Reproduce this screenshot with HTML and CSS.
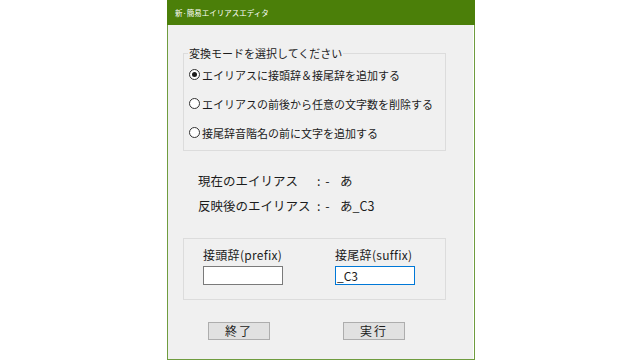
FILE: index.html
```html
<!DOCTYPE html>
<html lang="ja">
<head>
<meta charset="utf-8">
<title>新·簡易エイリアスエディタ</title>
<link rel="stylesheet" href="styles.css">
</head>
<body>
<div class="window">
  <div class="titlebar">新·簡易エイリアスエディタ</div>
  <div class="content">
    <fieldset class="group mode">
      <legend class="legend">変換モードを選択してください</legend>
      <div class="radio-row"><span class="radio checked"></span><span>エイリアスに接頭辞＆接尾辞を追加する</span></div>
      <div class="radio-row"><span class="radio"></span><span>エイリアスの前後から任意の文字数を削除する</span></div>
      <div class="radio-row"><span class="radio"></span><span>接尾辞音階名の前に文字を追加する</span></div>
    </fieldset>
    <div class="alias">
      <span class="alias-label">現在のエイリアス</span><span class="sep">: -</span><span>あ</span>
      <span class="alias-label">反映後のエイリアス</span><span class="sep">: -</span><span>あ_C3</span>
    </div>
    <fieldset class="group affix">
      <div class="field">
        <span class="field-label">接頭辞(prefix)</span>
        <span class="input"></span>
      </div>
      <div class="field">
        <span class="field-label">接尾辞(suffix)</span>
        <span class="input focused">_C3</span>
      </div>
    </fieldset>
    <div class="buttons">
      <span class="button">終了</span>
      <span class="button">実行</span>
    </div>
  </div>
</div>
</body>
</html>
```
FILE: styles.css
```css
* { box-sizing: border-box; }
html, body { margin: 0; padding: 0; }
body {
  width: 640px;
  height: 360px;
  background: #ffffff;
  font-family: "Noto Sans CJK JP", "Noto Sans", sans-serif;
  color: #1c1c1c;
  overflow: hidden;
}
.window {
  margin-left: 167px;
  width: 308px;
  height: 360px;
  border: 1px solid #6f9c3f;
  border-top: none;
  background: #f0f0f0;
  display: flex;
  flex-direction: column;
}
.titlebar {
  height: 25px;
  background: #4b7f09;
  color: #ffffff;
  font-size: 7.5px;
  line-height: 25px;
  padding-left: 8px;
  margin: 0 -1px;
  white-space: nowrap;
}
.content {
  flex: 1;
  display: flex;
  flex-direction: column;
  align-items: flex-start;
  border-right: 1px solid #ffffff;
}
.group {
  margin: 0 0 0 15px;
  width: 263px;
  border: 1px solid #dcdcdc;
  min-width: 0;
}
.mode {
  margin-top: 21px;
  padding: 0 0 3px 5px;
}
.legend {
  font-size: 11px;
  line-height: 14px;
  padding: 0 1px;
  margin-left: -1px;
  white-space: nowrap;
}
.radio-row {
  height: 29px;
  display: flex;
  align-items: center;
  gap: 2px;
  font-size: 11px;
  white-space: nowrap;
}
.radio {
  width: 11px;
  height: 11px;
  border: 1px solid #333333;
  border-radius: 50%;
  background: #ffffff;
  display: flex;
  align-items: center;
  justify-content: center;
  flex: none;
}
.radio.checked::after {
  content: "";
  width: 5px;
  height: 5px;
  border-radius: 50%;
  background: #1c1c1c;
}
.alias {
  margin: 17px 0 0 30px;
  display: grid;
  grid-template-columns: 119px 23px auto;
  font-size: 12.5px;
  line-height: 25px;
  white-space: nowrap;
}
.sep {
  letter-spacing: 1px;
}
.affix {
  margin-top: 20px;
  padding: 9px 0 14px 19px;
  display: grid;
  grid-template-columns: 132px auto;
}
.field {
  display: flex;
  flex-direction: column;
  gap: 4px;
}
.field-label {
  font-size: 12px;
  line-height: 14px;
  letter-spacing: 0.3px;
  white-space: nowrap;
}
.input {
  width: 80px;
  height: 19px;
  border: 1px solid #7a7a7a;
  background: #ffffff;
  font-size: 12px;
  line-height: 17px;
  padding-left: 1px;
}
.input.focused {
  border-color: #0078d7;
}
.buttons {
  margin: 22px 0 0 40px;
  display: flex;
  gap: 73px;
}
.button {
  width: 62px;
  height: 18px;
  border: 1px solid #adadad;
  background: #e1e1e1;
  font-size: 12px;
  line-height: 16px;
  text-align: center;
  letter-spacing: 2px;
}
```
